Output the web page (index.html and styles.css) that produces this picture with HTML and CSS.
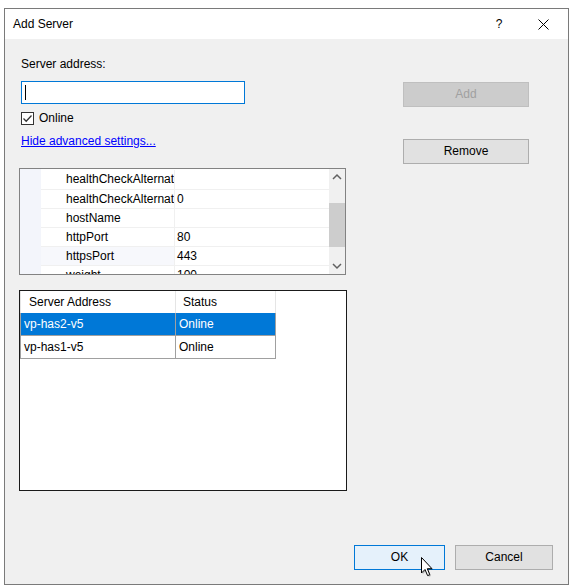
FILE: index.html
```html
<!DOCTYPE html>
<html>
<head>
<meta charset="utf-8">
<link rel="stylesheet" href="styles.css">
</head>
<body>
<div class="window">
  <div class="titlebar">
    <span class="title">Add Server</span>
    <span class="help">?</span>
    <span class="close"><svg width="11" height="11" viewBox="0 0 11 11"><path d="M0.5 0.5 L10.5 10.5 M10.5 0.5 L0.5 10.5" stroke="#000" stroke-width="1" fill="none"/></svg></span>
  </div>
  <div class="content">
    <div class="main">
      <div class="left">
        <div class="label">Server address:</div>
        <div class="textbox"><span class="caret"></span></div>
        <div class="check"><span class="box"><svg width="11" height="11" viewBox="0 0 11 11"><path d="M1.5 5.5 L4.2 8.2 L9.5 2.5" stroke="#333" stroke-width="1.3" fill="none"/></svg></span><span>Online</span></div>
        <div class="linkrow"><a class="link" href="#">Hide advanced settings...</a></div>
        <div class="propgrid">
          <div class="pg-gutter"></div>
          <div class="pg-rows">
            <div class="pg-row"><span class="pg-name">healthCheckAlternat</span><span class="pg-val"></span></div>
            <div class="pg-row"><span class="pg-name">healthCheckAlternat</span><span class="pg-val">0</span></div>
            <div class="pg-row"><span class="pg-name">hostName</span><span class="pg-val"></span></div>
            <div class="pg-row"><span class="pg-name">httpPort</span><span class="pg-val">80</span></div>
            <div class="pg-row hover"><span class="pg-name">httpsPort</span><span class="pg-val">443</span></div>
            <div class="pg-row"><span class="pg-name">weight</span><span class="pg-val">100</span></div>
          </div>
          <div class="scrollbar">
            <div class="sb-arrow"><svg width="16" height="16" viewBox="0 0 16 16"><polyline points="4,10 8,6 12,10" stroke="#606060" stroke-width="1.5" fill="none"/></svg></div>
            <div class="sb-track"><div class="sb-thumb"></div></div>
            <div class="sb-arrow"><svg width="16" height="16" viewBox="0 0 16 16"><polyline points="4,6 8,10 12,6" stroke="#606060" stroke-width="1.5" fill="none"/></svg></div>
          </div>
        </div>
        <div class="listview">
          <div class="lv-header">
            <div class="lv-h c1">Server Address</div>
            <div class="lv-h c2">Status</div>
          </div>
          <div class="lv-row selected">
            <div class="lv-c c1">vp-has2-v5</div>
            <div class="lv-c c2">Online</div>
          </div>
          <div class="lv-row">
            <div class="lv-c c1">vp-has1-v5</div>
            <div class="lv-c c2">Online</div>
          </div>
        </div>
      </div>
      <div class="right">
        <div class="btn disabled add">Add</div>
        <div class="btn remove">Remove</div>
      </div>
    </div>
    <div class="footer">
      <div class="btn ok">OK</div>
      <div class="btn cancel">Cancel</div>
    </div>
  </div>
</div>
<svg class="cursor" width="14" height="22" viewBox="0 0 14 22">
  <path d="M1.5 1.5 L1.5 17 L5 13.5 L7.6 19.6 L9.8 18.7 L7.3 12.7 L12 12.7 Z" fill="#000" opacity="0.25" transform="translate(1.2,1.2)"/>
  <path d="M1.5 1.5 L1.5 17 L5 13.5 L7.6 19.6 L9.8 18.7 L7.3 12.7 L12 12.7 Z" fill="#fff" stroke="#000" stroke-width="1" stroke-linejoin="miter"/>
</svg>
</body>
</html>
```
FILE: styles.css
```css
html, body {
  margin: 0;
  padding: 0;
  background: #ffffff;
}
body {
  position: relative;
  padding: 8px 0 0 4px;
  font-family: "Liberation Sans", Arial, sans-serif;
  font-size: 12px;
  color: #000;
}
.window {
  box-sizing: border-box;
  width: 565px;
  height: 577px;
  border: 1px solid #7a7a7a;
  display: flex;
  flex-direction: column;
  background: #f0f0f0;
}
.titlebar {
  height: 30px;
  background: #ffffff;
  display: flex;
  align-items: center;
  padding-left: 8px;
  flex-shrink: 0;
}
.title {
  flex: 1;
  line-height: 15px;
}
.help {
  width: 10px;
  margin-right: 34px;
  text-align: center;
  line-height: 15px;
}
.close {
  width: 11px;
  height: 11px;
  margin-right: 19px;
  display: flex;
}
.content {
  flex: 1;
  display: flex;
  flex-direction: column;
  background: #f0f0f0;
}
.main {
  display: flex;
  padding-left: 14px;
}
.left {
  width: 328px;
  display: flex;
  flex-direction: column;
  padding-top: 18px;
}
.label {
  margin-left: 2px;
  line-height: 15px;
  height: 15px;
}
.textbox {
  box-sizing: border-box;
  margin-top: 9px;
  margin-left: 2px;
  width: 224px;
  height: 23px;
  border: 1px solid #0078d7;
  background: #fff;
  display: flex;
  align-items: center;
  padding-left: 3px;
}
.caret {
  width: 1px;
  height: 15px;
  background: #000;
}
.check {
  margin-top: 7px;
  margin-left: 2px;
  height: 14px;
  display: flex;
  align-items: center;
  gap: 5px;
  line-height: 14px;
}
.box {
  box-sizing: border-box;
  width: 13px;
  height: 13px;
  border: 1px solid #333;
  background: #fff;
  display: flex;
}
.linkrow {
  margin-top: 8px;
  margin-left: 2px;
  line-height: 16px;
  height: 16px;
}
.link {
  color: #0000ff;
  text-decoration: underline;
}
.propgrid {
  box-sizing: border-box;
  margin-top: 19px;
  width: 327px;
  height: 107px;
  border: 1px solid #828282;
  background: #fff;
  display: flex;
  overflow: hidden;
}
.pg-gutter {
  width: 21px;
  background: #f3f5fb;
  flex-shrink: 0;
}
.pg-rows {
  width: 288px;
  flex-shrink: 0;
  padding-top: 1px;
  overflow: hidden;
}
.pg-row {
  display: flex;
  height: 19px;
  box-sizing: border-box;
  border-bottom: 1px solid #f0f0f0;
  line-height: 18px;
}
.pg-row:first-child {
  height: 20px;
  line-height: 19px;
}
.pg-row.hover .pg-name {
  background: #f7f8fc;
}
.pg-name {
  box-sizing: border-box;
  width: 134px;
  padding-left: 25px;
  border-right: 1px solid #f0f0f0;
  white-space: nowrap;
  overflow: hidden;
  flex-shrink: 0;
}
.pg-val {
  padding-left: 2px;
  flex: 1;
}
.scrollbar {
  width: 16px;
  flex-shrink: 0;
  background: #f0f0f0;
  display: flex;
  flex-direction: column;
}
.sb-arrow {
  height: 16px;
  display: flex;
}
.sb-track {
  flex: 1;
  padding-top: 18px;
}
.sb-thumb {
  height: 44px;
  background: #cdcdcd;
}
.listview {
  box-sizing: border-box;
  margin-top: 15px;
  width: 328px;
  height: 201px;
  border: 1px solid #1a1a1a;
  background: #fff;
}
.lv-header {
  display: flex;
  height: 22px;
  border-left: 1px solid #e5e5e5;
  width: 256px;
  box-sizing: border-box;
}
.lv-h {
  box-sizing: border-box;
  border-right: 1px solid #e5e5e5;
  line-height: 22px;
  white-space: nowrap;
}
.lv-h.c1 {
  width: 155px;
  padding-left: 8px;
}
.lv-h.c2 {
  width: 100px;
  padding-left: 7px;
}
.lv-row {
  display: flex;
  height: 23px;
  box-sizing: border-box;
  width: 256px;
  border-left: 1px solid #a0a0a0;
  border-bottom: 1px solid #a0a0a0;
}
.lv-c {
  box-sizing: border-box;
  border-right: 1px solid #a0a0a0;
  line-height: 22px;
  white-space: nowrap;
}
.lv-c.c1 {
  width: 155px;
  padding-left: 3px;
}
.lv-c.c2 {
  width: 100px;
  padding-left: 3px;
}
.lv-row.selected .lv-c {
  background: #0078d7;
  color: #fff;
}
.right {
  margin-left: 56px;
  width: 126px;
  display: flex;
  flex-direction: column;
  padding-top: 43px;
}
.btn {
  box-sizing: border-box;
  height: 25px;
  border: 1px solid #adadad;
  background: #e1e1e1;
  display: flex;
  align-items: center;
  justify-content: center;
  line-height: 15px;
}
.btn.disabled {
  background: #cccccc;
  border-color: #bfbfbf;
  color: #a0a0a0;
}
.btn.remove {
  margin-top: 32px;
}
.footer {
  margin-top: auto;
  display: flex;
  justify-content: flex-end;
  gap: 10px;
  padding-right: 15px;
  padding-bottom: 14px;
}
.btn.ok {
  width: 91px;
  border-color: #0078d7;
  background: #e5f1fb;
}
.btn.cancel {
  width: 98px;
}
.cursor {
  position: absolute;
  left: 420px;
  top: 556px;
}
```
